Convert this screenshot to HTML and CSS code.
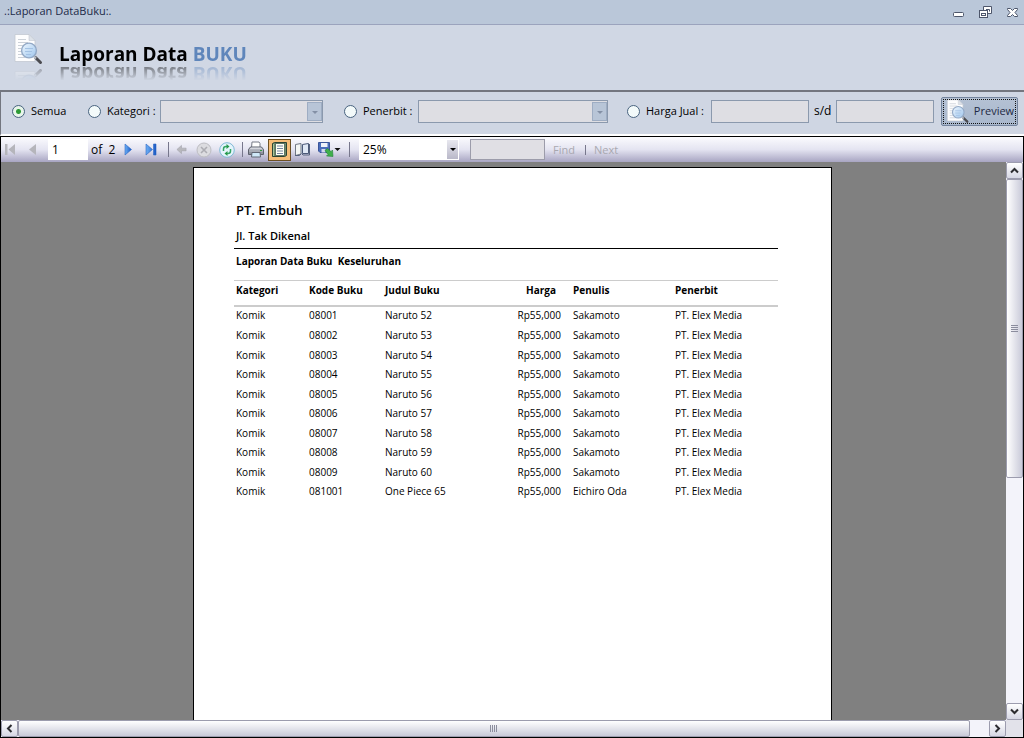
FILE: index.html
```html
<!DOCTYPE html>
<html lang="id">
<head>
<meta charset="utf-8">
<title>.:Laporan DataBuku:.</title>
<link rel="stylesheet" href="styles.css">
</head>
<body>
<svg class="defs" aria-hidden="true">
  <defs>
    <linearGradient id="lens" x1="0" y1="0" x2="1" y2="1"><stop offset="0" stop-color="#eef7ff"/><stop offset="1" stop-color="#9dc4ec"/></linearGradient>
    <linearGradient id="blue" x1="0" y1="0" x2="1" y2="0"><stop offset="0" stop-color="#6db0f5"/><stop offset="1" stop-color="#1757c4"/></linearGradient>
    <symbol id="doc-search" viewBox="0 0 30 32">
      <path d="M2 1h14l6 6v21H2z" fill="#fdfdfe" stroke="#c3c8d0" stroke-width=".8"/>
      <path d="M16 1v6h6z" fill="#dde2e9" stroke="#c3c8d0" stroke-width=".6"/>
      <path d="M5 6h8M5 9h10M5 12h6M5 15h5M5 18h5M5 21h5M5 24h7" stroke="#ccd1d8" stroke-width="1"/>
      <path d="M22.500 24l5 5" stroke="#4b4b50" stroke-width="3" stroke-linecap="round"/>
      <path d="M20 22l3 3" stroke="#b9bec7" stroke-width="2"/>
      <circle cx="16" cy="17" r="7.400" fill="url(#lens)" stroke="#93a9c6" stroke-width="1.400"/>
      <path d="M12 15h8M12 18h7M13 21h5" stroke="#a3c2e4" stroke-width="1"/>
    </symbol>
  </defs>
</svg>

<header class="titlebar">
  <span class="titlebar-text">.:Laporan DataBuku:.</span>
  <div class="window-buttons">
    <button type="button" aria-label="Minimize"><svg width="13" height="13" viewBox="0 0 13 13"><rect x="1.500" y="6.500" width="10" height="4" rx="1" fill="#fff" stroke="#4d566b"/></svg></button>
    <button type="button" aria-label="Restore"><svg width="15" height="13" viewBox="0 0 15 13"><path d="M5.500.500h8v7h-8z" fill="#fff" stroke="#4d566b"/><path d="M8 3.500h3.500v2" fill="none" stroke="#4d566b"/><rect x="1.500" y="4.500" width="8" height="7" fill="#fff" stroke="#4d566b"/><rect x="3.500" y="7.500" width="4" height="2" fill="none" stroke="#4d566b"/></svg></button>
    <button type="button" aria-label="Close"><svg width="13" height="13" viewBox="0 0 13 13"><path d="M1.500 2.500h3l2 2 2-2h3v1L9 6.500l2.500 3v1h-3l-2-2-2 2h-3v-1l2.500-3-2.500-3z" fill="#fff" stroke="#4d566b"/></svg></button>
  </div>
</header>

<section class="banner">
  <svg class="banner-icon" width="30" height="33"><use href="#doc-search"/></svg>
  <h1 class="banner-title">Laporan Data <span class="accent">BUKU</span></h1>
</section>

<form class="filters">
  <label class="choice choice-all"><input type="radio" name="filter" checked>Semua</label>
  <label class="choice choice-category"><input type="radio" name="filter">Kategori :</label>
  <span class="combo combo-category"><select disabled aria-label="Kategori"></select><span class="combo-arrow"></span></span>
  <label class="choice choice-publisher"><input type="radio" name="filter">Penerbit :</label>
  <span class="combo combo-publisher"><select disabled aria-label="Penerbit"></select><span class="combo-arrow"></span></span>
  <label class="choice choice-price"><input type="radio" name="filter">Harga Jual :</label>
  <input class="price" type="text" disabled aria-label="Harga Jual dari">
  <span class="until">s/d</span>
  <input class="price" type="text" disabled aria-label="Harga Jual sampai">
  <button class="preview" type="button"><svg width="25" height="25" viewBox="0 0 30 32"><use href="#doc-search"/></svg>Preview</button>
</form>

<main class="viewer">
  <div class="toolbar">
    <button class="tool tool-first" type="button" aria-label="First page"><svg width="12" height="13" viewBox="0 0 12 13"><path d="M1 1h2.500v11H1zM11 1v11L4.500 6.500z" fill="#b5b5bb"/></svg></button>
    <button class="tool tool-prev" type="button" aria-label="Previous page"><svg width="12" height="13" viewBox="0 0 12 13"><path d="M9 1v11L2 6.500z" fill="#b5b5bb"/></svg></button>
    <input class="page-number" type="text" value="1" aria-label="Page">
    <span class="page-count">of&nbsp; 2</span>
    <button class="tool tool-next" type="button" aria-label="Next page"><svg width="12" height="13" viewBox="0 0 12 13"><path d="M3 1v11l6.500-5.500z" fill="url(#blue)" stroke="#2b66c4" stroke-width=".6"/></svg></button>
    <button class="tool tool-last" type="button" aria-label="Last page"><svg width="12" height="13" viewBox="0 0 12 13"><path d="M1 1v11l6.500-5.500zM8.500 1H11v11H8.500z" fill="url(#blue)" stroke="#2b66c4" stroke-width=".6"/></svg></button>
    <span class="sep"></span>
    <button class="tool tool-back" type="button" aria-label="Back"><svg width="11" height="11" viewBox="0 0 12 12"><path d="M1 6l5-4.500V4.500h5v3H6v3z" fill="#b8b8bd" stroke="#a2a2aa" stroke-width=".6"/></svg></button>
    <button class="tool tool-stop" type="button" aria-label="Stop"><svg width="16" height="16" viewBox="0 0 16 16"><circle cx="8" cy="8" r="7" fill="#dcdce0" stroke="#bdbdc2"/><path d="M5 5l6 6M11 5l-6 6" stroke="#acacb2" stroke-width="1.600"/></svg></button>
    <button class="tool tool-refresh" type="button" aria-label="Refresh"><svg width="16" height="16" viewBox="0 0 16 16"><circle cx="8" cy="8" r="7.300" fill="#e4f4fb" stroke="#7fb9d6"/><path d="M4.500 9V7Q4.500 4.500 7 4.500h1" fill="none" stroke="#35a565" stroke-width="1.500"/><path d="M7.500 2L10.500 4.500 7.500 7z" fill="#25994a"/><path d="M11.500 7v2Q11.500 11.500 9 11.500H8" fill="none" stroke="#35a565" stroke-width="1.500"/><path d="M8.500 9L5.500 11.500l3 2.500z" fill="#25994a"/></svg></button>
    <span class="sep"></span>
    <button class="tool tool-print" type="button" aria-label="Print"><svg width="18" height="17" viewBox="0 0 18 17"><path d="M4.500 7l.5-6h7l1 1.500V7z" fill="#fff" stroke="#777b86"/><path d="M1.500 8.500l2-2.500h11l2 2.500v5h-15z" fill="#8f939e" stroke="#5d616c"/><path d="M2 8.500l2-2h10l2 2z" fill="#d4d6dd"/><path d="M2 10h14" stroke="#c3c6ce"/><path d="M5 11.500h8l.5 4.500h-9z" fill="#cfe8f8" stroke="#616774"/><path d="M13 9.500h2" stroke="#2e9a3c"/></svg></button>
    <button class="tool tool-layout" type="button" aria-label="Print layout" aria-pressed="true"><svg width="17" height="17" viewBox="0 0 17 17"><path d="M1.500 2.500l2-1h12v13l-2 1h-12z" fill="#6d8a6a" stroke="#2c4434"/><path d="M2.500 3v12" stroke="#a5c49a"/><rect x="4.500" y="2.500" width="9" height="12" fill="#fffff4" stroke="#5d7564"/><path d="M6 5h6M6 7.500h6M6 10h6M6 12.500h6" stroke="#7485a0"/></svg></button>
    <button class="tool tool-setup" type="button" aria-label="Page setup"><svg width="17" height="15" viewBox="0 0 17 15"><path d="M1.500 13.500v-11l5.500-1v10.500z" fill="#f4f6f4" stroke="#6f7683"/><path d="M8.500 2.500l6-1v10h-6z" fill="#dfe7f4" stroke="#4b5877"/><path d="M15.500 2v11H9l-1.500-1.500-2 2H1" stroke="#55617c" fill="none"/><path d="M7.500 2.500v9" stroke="#a3adbd"/></svg></button>
    <button class="tool tool-export" type="button" aria-label="Export"><svg width="24" height="17" viewBox="0 0 24 17"><path d="M1.500 1.500h11v10h-9.500l-1.500-1.500z" fill="#4a6dbb" stroke="#3a559a"/><path d="M4 2h6.500v4H4z" fill="#eef2fa"/><path d="M4.500 8h4v3.500h-4z" fill="#d0d8ea"/><path d="M8 9.500l2.500-2 3.500 3 1.500-1.500.5 6.500-6.500-.5 1.500-1.500z" fill="#3fb04a" stroke="#23813a" stroke-width=".6"/><path d="M17.500 7h6l-3 3z" fill="#111"/></svg></button>
    <span class="sep"></span>
    <span class="zoom"><select aria-label="Zoom"><option>25%</option></select><span class="zoom-arrow"></span></span>
    <input class="find-text" type="text" disabled aria-label="Find text">
    <button class="link-button" type="button" disabled>Find</button>
    <span class="sep sep-small"></span>
    <button class="link-button" type="button" disabled>Next</button>
  </div>

  <div class="stage">
    <div class="canvas">
      <article class="sheet">
        <h2 class="company">PT. Embuh</h2>
        <p class="address">Jl. Tak Dikenal</p>
        <p class="subject">Laporan Data Buku&nbsp; Keseluruhan</p>
        <table class="books">
          <colgroup><col class="c-kategori"><col class="c-kode"><col class="c-judul"><col class="c-harga"><col class="c-penulis"><col class="c-penerbit"></colgroup>
          <thead><tr><th>Kategori</th><th>Kode Buku</th><th>Judul Buku</th><th class="money">Harga</th><th>Penulis</th><th>Penerbit</th></tr></thead>
          <tbody>
            <tr><td>Komik</td><td>08001</td><td>Naruto 52</td><td class="money">Rp55,000</td><td>Sakamoto</td><td>PT. Elex Media</td></tr>
            <tr><td>Komik</td><td>08002</td><td>Naruto 53</td><td class="money">Rp55,000</td><td>Sakamoto</td><td>PT. Elex Media</td></tr>
            <tr><td>Komik</td><td>08003</td><td>Naruto 54</td><td class="money">Rp55,000</td><td>Sakamoto</td><td>PT. Elex Media</td></tr>
            <tr><td>Komik</td><td>08004</td><td>Naruto 55</td><td class="money">Rp55,000</td><td>Sakamoto</td><td>PT. Elex Media</td></tr>
            <tr><td>Komik</td><td>08005</td><td>Naruto 56</td><td class="money">Rp55,000</td><td>Sakamoto</td><td>PT. Elex Media</td></tr>
            <tr><td>Komik</td><td>08006</td><td>Naruto 57</td><td class="money">Rp55,000</td><td>Sakamoto</td><td>PT. Elex Media</td></tr>
            <tr><td>Komik</td><td>08007</td><td>Naruto 58</td><td class="money">Rp55,000</td><td>Sakamoto</td><td>PT. Elex Media</td></tr>
            <tr><td>Komik</td><td>08008</td><td>Naruto 59</td><td class="money">Rp55,000</td><td>Sakamoto</td><td>PT. Elex Media</td></tr>
            <tr><td>Komik</td><td>08009</td><td>Naruto 60</td><td class="money">Rp55,000</td><td>Sakamoto</td><td>PT. Elex Media</td></tr>
            <tr><td>Komik</td><td>081001</td><td>One Piece 65</td><td class="money">Rp55,000</td><td>Eichiro Oda</td><td>PT. Elex Media</td></tr>
          </tbody>
        </table>
      </article>
    </div>
    <div class="scroll scroll-v">
      <button type="button" aria-label="Scroll up"><svg width="9" height="7" viewBox="0 0 9 7"><path d="M1 5.500l3.500-3.500L8 5.500" fill="none" stroke="#2c2c30" stroke-width="2"/></svg></button>
      <div class="track"><div class="thumb"><span class="grip"></span></div></div>
      <button type="button" aria-label="Scroll down"><svg width="9" height="7" viewBox="0 0 9 7"><path d="M1 1.500L4.500 5 8 1.500" fill="none" stroke="#2c2c30" stroke-width="2"/></svg></button>
    </div>
    <div class="scroll scroll-h">
      <button type="button" aria-label="Scroll left"><svg width="7" height="9" viewBox="0 0 7 9"><path d="M5.500 1L2 4.500 5.500 8" fill="none" stroke="#2c2c30" stroke-width="2"/></svg></button>
      <div class="track"><div class="thumb"><span class="grip"></span></div></div>
      <button type="button" aria-label="Scroll right"><svg width="7" height="9" viewBox="0 0 7 9"><path d="M1.500 1L5 4.500 1.500 8" fill="none" stroke="#2c2c30" stroke-width="2"/></svg></button>
    </div>
    <div class="corner"></div>
  </div>
</main>
</body>
</html>
```
FILE: styles.css
```css
* { box-sizing: border-box; }

html, body { height: 100%; }

body {
  margin: 0;
  display: flex;
  flex-direction: column;
  overflow: hidden;
  background: #cfd6e3;
  color: #000;
  font: 11px/16px "Open Sans", "Noto Sans", sans-serif;
}

button, input, select { font: inherit; color: inherit; margin: 0; padding: 0; }
button { display: flex; align-items: center; justify-content: center; border: 0; background: none; }
svg { display: block; flex: none; }
.defs { position: absolute; width: 0; height: 0; }

/* Title bar */
.titlebar {
  flex: none;
  display: flex;
  justify-content: space-between;
  align-items: center;
  height: 25px;
  padding: 0 5px 2px 4px;
  border-bottom: 1px solid #9ba3bd;
  background: #bac7d9;
  color: #1c2a48;
}
.window-buttons { display: flex; gap: 13px; padding-top: 2px; }

/* Banner */
.banner {
  flex: none;
  display: flex;
  gap: 16px;
  height: 65px;
  padding: 8px 13px 0;
  background: #d0d7e4;
}
.banner-icon {
  -webkit-box-reflect: below 1px linear-gradient(transparent 60%, rgba(0, 0, 0, 0.4));
}
.banner-title {
  margin: 8px 0 0;
  height: 26px;
  color: #000;
  font-size: 19px;
  font-weight: 700;
  line-height: 26px;
  -webkit-box-reflect: below -6px linear-gradient(transparent 25%, rgba(0, 0, 0, 0.4) 76%, transparent 77%);
}
.accent { color: #5f86bb; }

/* Filters */
.filters {
  flex: none;
  display: flex;
  align-items: center;
  height: 46px;
  padding: 0 6px 4px 11px;
  border-top: 2px solid #73767f;
  border-left: 1px solid #73767f;
  border-bottom: 2px solid #fff;
  background: #cfd6e3;
}
.choice { flex: none; display: flex; align-items: center; gap: 6px; white-space: nowrap; }
.choice input {
  appearance: none;
  width: 13px;
  height: 13px;
  border: 1px solid #48637f;
  border-radius: 50%;
  background: #f3fafa;
}
.choice input:checked { background: radial-gradient(circle, #2c9a35 0 2px, #e8f5ea 3px); }
.choice-all { width: 76px; }
.choice-category { width: 72px; }
.choice-publisher { width: 74px; margin-left: 21px; }
.choice-price { width: 84px; margin-left: 19px; }
.combo { display: flex; position: relative; height: 23px; }
.combo select, .price {
  appearance: none;
  height: 23px;
  border: 1px solid #8b99ad;
  border-radius: 0;
  background: #dedee3;
  opacity: 1;
}
.combo select { width: 100%; }
.combo-category { flex: 163 1 0; }
.combo-publisher { flex: 190 1 0; }
.combo-arrow {
  position: absolute;
  top: 2px;
  right: 1px;
  bottom: 2px;
  width: 15px;
  border: 1px solid #9eadc3;
  background: #b8c5d7;
}
.combo-arrow::after {
  content: "";
  position: absolute;
  top: 8px;
  left: 4px;
  border: 3px solid transparent;
  border-top-color: #8390a5;
}
.price { flex: 96 1 0; min-width: 0; }
.until { flex: none; width: 27px; padding-left: 5px; font-size: 12px; }
.preview {
  flex: none;
  gap: 4px;
  width: 77px;
  height: 29px;
  margin-left: 7px;
  border: 1px solid #74849d;
  border-radius: 2px;
  outline: 1px dotted #111;
  outline-offset: -3px;
  background: linear-gradient(#b4c1d4, #a9b8cd);
  color: #1e2a44;
}

/* Report viewer */
.viewer {
  flex: 1;
  min-height: 0;
  display: flex;
  flex-direction: column;
  border: 1px solid #000;
}
.toolbar {
  flex: none;
  display: flex;
  align-items: center;
  height: 25px;
  padding-left: 3px;
  background: linear-gradient(#fbfbfe, #e4e4f1 50%, #a8a5c2);
  font-size: 12px;
}
.tool { flex: none; height: 23px; }
.tool-first, .tool-prev { width: 12px; margin-right: 11px; }
.page-number {
  width: 40px;
  height: 21px;
  margin-left: -2px;
  padding: 0 4px;
  border: 0;
  background: #fff;
}
.page-count { width: 31px; margin-left: 3px; white-space: nowrap; }
.tool-next { width: 12px; margin-right: 11px; }
.tool-last { width: 12px; }
.sep { width: 1px; height: 15px; margin: 0 5px 0 11px; background: #77778c; }
.tool-back { width: 14px; margin-right: 8px; }
.tool-stop { width: 16px; margin-right: 7px; }
.tool-refresh { width: 16px; }
.tool-refresh + .sep { margin: 0 4px 0 7px; }
.tool-print { width: 18px; margin-right: 3px; }
.tool-layout { width: 23px; height: 22px; border: 1px solid #6d5022; background: #f5bd78; }
.tool-setup { width: 17px; margin: 0 6px 0 3px; }
.tool-export { width: 24px; }
.tool-export + .sep { margin: 0 9px 0 8px; }
.zoom { position: relative; display: flex; width: 100px; height: 21px; }
.zoom select {
  appearance: none;
  width: 100%;
  padding: 0 4px;
  border: 0;
  border-radius: 0;
  background: #fff;
}
.zoom-arrow {
  position: absolute;
  top: 1px;
  right: 1px;
  bottom: 1px;
  width: 11px;
  background: linear-gradient(#e8e8ef, #b9b8c9);
}
.zoom-arrow::after {
  content: "";
  position: absolute;
  top: 8px;
  left: 3px;
  border: 3px solid transparent;
  border-top-color: #000;
}
.find-text {
  width: 75px;
  height: 21px;
  margin: 0 8px 0 11px;
  border: 1px solid #9c9caa;
  background: #e0dfe4;
}
.link-button { color: #a9a8b0; font-size: 11px; }
.sep-small { height: 10px; margin: 0 8px 0 10px; }

/* Report area with its scroll bars */
.stage {
  flex: 1;
  min-height: 0;
  display: grid;
  grid-template: minmax(0, 1fr) 17px / minmax(0, 1fr) 17px;
}
.canvas {
  display: flex;
  justify-content: center;
  overflow: hidden;
  padding: 5px 0 0 18px;
  background: #808080;
}
.sheet {
  flex: none;
  width: 639px;
  padding: 32px 53px 0 40px;
  border: 1px solid #000;
  border-bottom: 0;
  background: #fff;
}
.company { margin: 0 0 8px; padding-left: 2px; font-size: 13px; font-weight: 600; line-height: 20px; }
.address {
  margin: 0;
  padding: 0 2px 4px;
  border-bottom: 1px solid #000;
  font-weight: 600;
}
.subject { margin: 4px 0 11px; padding-left: 2px; font-size: 10px; font-weight: 700; }
.books {
  width: 100%;
  height: 222px;
  border-collapse: collapse;
  table-layout: fixed;
  font-size: 10px;
  line-height: 14px;
}
.books th { height: 25px; padding: 0 0 5px 2px; border-top: 1px solid #ccc; border-bottom: 2px solid #ccc; font-weight: 700; text-align: left; }
.books td { padding: 0 0 2px 2px; white-space: nowrap; }
.books .money { padding-right: 10px; text-align: right; }
.books th.money { padding-right: 15px; }
.c-kategori { width: 73px; }
.c-kode { width: 76px; }
.c-judul { width: 108px; }
.c-harga { width: 80px; }
.c-penulis { width: 102px; }

.scroll { display: flex; background: #f3f3fa; }
.scroll-v { flex-direction: column; }
.scroll button {
  flex: none;
  width: 17px;
  height: 17px;
  border: 1px solid #9c9cae;
  border-radius: 2px;
  background: linear-gradient(#fff, #d6d7e4);
}
.track { flex: 1; display: flex; min-width: 0; min-height: 0; }
.scroll-v .track { flex-direction: column; }
.thumb {
  display: flex;
  align-items: center;
  justify-content: center;
  border: 1px solid #9c9cae;
  border-radius: 2px;
}
.scroll-v .thumb { height: 57%; background: linear-gradient(90deg, #fff, #c9cad9); }
.scroll-h .thumb { width: 98%; background: linear-gradient(#fff, #c9cad9); }
.grip { width: 7px; height: 7px; }
.scroll-v .grip { background: repeating-linear-gradient(#8b8d9e 0 1px, transparent 1px 2px); }
.scroll-h .grip { background: repeating-linear-gradient(90deg, #8b8d9e 0 1px, transparent 1px 2px); }
.corner { background: #e2e2ea; }
```
